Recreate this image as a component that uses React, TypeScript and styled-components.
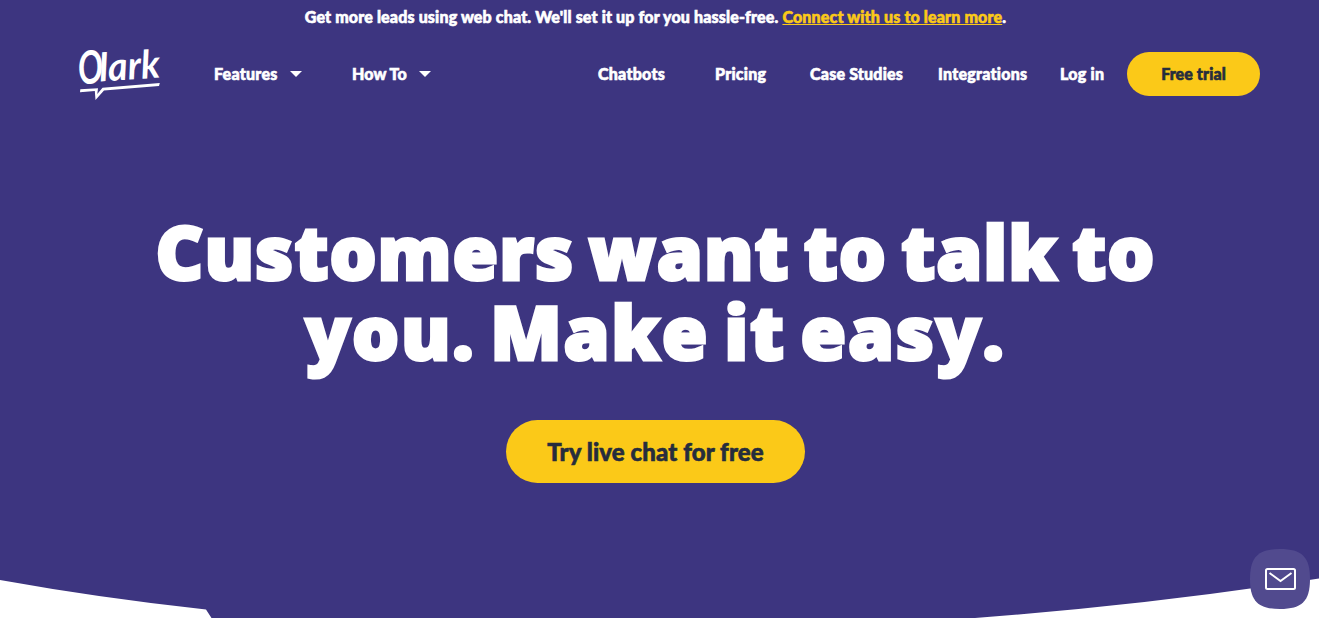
import React from "react";
import styled, { createGlobalStyle } from "styled-components";

const GlobalStyle = createGlobalStyle`
  * {
    box-sizing: border-box;
  }

  body {
    margin: 0;
    overflow: hidden;
    font-family: Lato, "Open Sans", sans-serif;
    font-weight: 900;
    color: #fff;
    background-color: #fff;
  }
`;

const Page = styled.div`
  position: relative;
  height: 618px;
  overflow: hidden;
  background-color: #3d3580;
`;

const Curve = styled.svg`
  position: absolute;
  inset: 0;
`;

const Banner = styled.div`
  display: flex;
  justify-content: center;
  height: 34px;
  padding-right: 8px;
  font-size: 16px;
  line-height: 33px;
  letter-spacing: 0.15px;
  white-space: pre;
  -webkit-text-stroke: 0.6px currentColor;
`;

const BannerLink = styled.a`
  color: #fbc918;
  text-decoration: underline;
  text-decoration-color: #fbc918;
  text-decoration-thickness: 1px;
  text-decoration-skip-ink: none;
  text-underline-offset: 1px;
`;

const Nav = styled.nav`
  display: grid;
  grid-template-columns: 134px 138px 246px 117px 95px 128px 122px 67px 133px;
  align-items: center;
  height: 80px;
  padding-left: 80px;
`;

const NavLink = styled.a<{ $spacing?: number }>`
  display: flex;
  align-items: center;
  font-size: 16px;
  line-height: 20px;
  letter-spacing: ${({ $spacing }) => $spacing ?? 0.25}px;
  white-space: nowrap;
  -webkit-text-stroke: 0.6px currentColor;
`;

const Caret = styled.span`
  margin-left: 12px;
  border: 6px solid transparent;
  border-top: 6px solid #fff;
  border-bottom: 0;
`;

const Button = styled.a<{ $large?: boolean }>`
  display: flex;
  align-items: center;
  justify-content: center;
  width: ${({ $large }) => ($large ? 299 : 133)}px;
  height: ${({ $large }) => ($large ? 63 : 44)}px;
  padding-bottom: ${({ $large }) => ($large ? 0 : 1)}px;
  border-radius: 32px;
  font-size: ${({ $large }) => ($large ? 24 : 16)}px;
  letter-spacing: 0.1px;
  color: #262d3d;
  background-color: #fbc918;
  -webkit-text-stroke: 0.6px currentColor;
`;

const Hero = styled.main`
  display: flex;
  flex-direction: column;
  align-items: center;
  padding: 98px 8px 0 0;
`;

const Title = styled.h1`
  margin: 0 0 48px;
  font-family: "Open Sans", "Noto Sans", sans-serif;
  font-size: 74px;
  font-weight: 800;
  line-height: 80px;
  text-align: center;
  white-space: nowrap;
  -webkit-text-stroke: 3px #fff;
`;

const TitleLine = styled.span<{ $spacing: number }>`
  display: block;
  letter-spacing: ${({ $spacing }) => $spacing}px;
  word-spacing: -6px;
`;

const ChatButton = styled.button`
  position: absolute;
  right: 9px;
  bottom: 9px;
  width: 60px;
  height: 60px;
  padding: 0;
  border: 0;
  background: none;
`;

const Logo: React.FC = () => (
  <svg width="82" height="56" viewBox="0 0 82 56" fill="#fff" overflow="visible">
    <g
      transform="rotate(-4 0 38)"
      fontFamily="Lato"
      fontStyle="italic"
      fontWeight="700"
    >
      <text x="-1" y="38.5" fontSize="46" textLength="25" lengthAdjust="spacingAndGlyphs">
        O
      </text>
      <text x="20" y="37" fontSize="39" textLength="61" lengthAdjust="spacingAndGlyphs">
        lark
      </text>
    </g>
    <path d="M.3 43.200 18 42.200 17.300 48 22.500 41.800 79.800 37 79 40 24 44.600 15.500 54 14.800 45 0 46.200Z" />
  </svg>
);

const App: React.FC = () => {
  return (
    <>
      <GlobalStyle />
      <Page>
        <Curve width="1319" height="618" viewBox="0 0 1319 618" fill="#fff">
          <path d="M0 580Q100 598 206 609.5L211.500 618H0Z" />
          <path d="M975 618Q1150 605 1319 578.500V618Z" />
        </Curve>
        <Banner>
          <span>
            Get more leads using web chat. We'll set it up for you hassle-free.{" "}
          </span>
          <BannerLink>Connect with us to learn more</BannerLink>.
        </Banner>
        <Nav>
          <Logo />
          <NavLink>
            Features
            <Caret />
          </NavLink>
          <NavLink $spacing={0.1}>
            How To
            <Caret />
          </NavLink>
          <NavLink>Chatbots</NavLink>
          <NavLink>Pricing</NavLink>
          <NavLink $spacing={0.2}>Case Studies</NavLink>
          <NavLink>Integrations</NavLink>
          <NavLink>Log in</NavLink>
          <Button>Free trial</Button>
        </Nav>
        <Hero>
          <Title>
            <TitleLine $spacing={1}>Customers want to talk to</TitleLine>
            <TitleLine $spacing={1.7}>you. Make it easy.</TitleLine>
          </Title>
          <Button $large>Try live chat for free</Button>
        </Hero>
        <ChatButton>
          <svg width="60" height="60" viewBox="0 0 60 60" fill="none">
            <path
              d="M30 0C52 0 60 8 60 30S52 60 30 60 0 52 0 30 8 0 30 0Z"
              fill="#514a8e"
            />
            <rect
              x="16"
              y="20"
              width="29"
              height="20"
              rx="1.500"
              stroke="#fff"
              strokeWidth="2"
            />
            <path d="M19.500 24 30.500 32 41.500 24" stroke="#fff" strokeWidth="2" />
          </svg>
        </ChatButton>
      </Page>
    </>
  );
};

export default App;
